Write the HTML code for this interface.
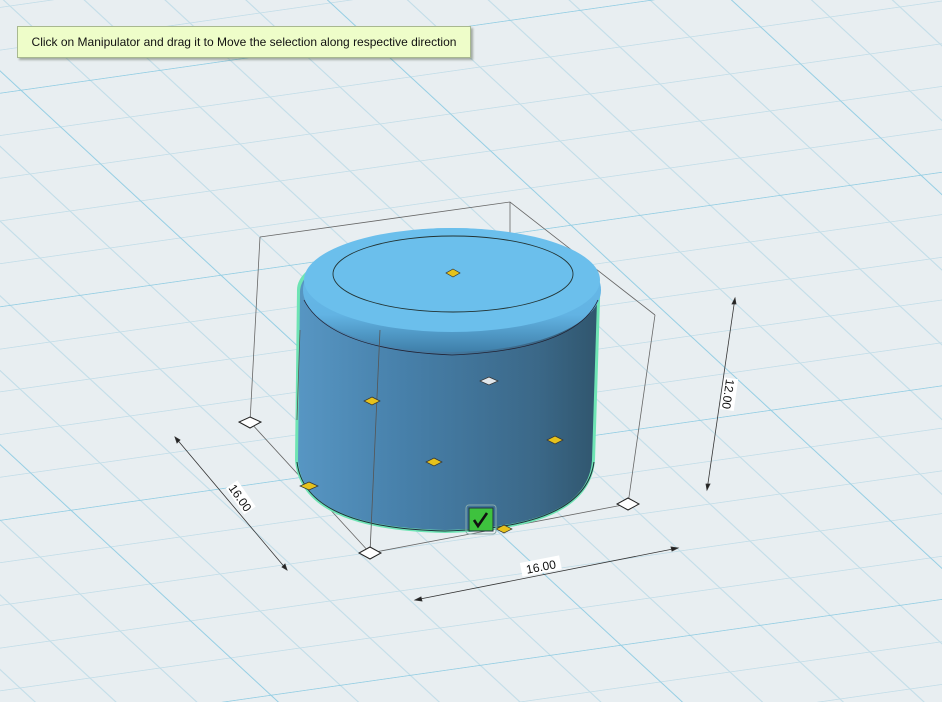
<!DOCTYPE html>
<html><head><style>
html,body{margin:0;padding:0;width:942px;height:702px;overflow:hidden;background:#e8eef1}
.tip{position:absolute;left:17px;top:26px;width:452px;height:30px;background:#eefdc9;border:1px solid #a8b890;box-shadow:2px 2px 2px rgba(80,90,70,.45);font:12px "Liberation Sans",sans-serif;color:#111;line-height:30px;text-align:center}
</style></head><body>
<svg width="942" height="702" style="position:absolute;left:0;top:0">
<defs>
<pattern id="g" width="500" height="500" patternUnits="userSpaceOnUse" patternTransform="matrix(0.7,-0.1,0.4,0.37,20,90)">
<path d="M100 0V500M200 0V500M300 0V500M400 0V500M0 100H500M0 200H500M0 300H500M0 400H500" stroke="#c2dde8" stroke-width="2" fill="none"/>
<path d="M0 0V500M0 0H500" stroke="#92cde3" stroke-width="3.5" fill="none"/>
</pattern>
<linearGradient id="body" x1="0" x2="1" y1="0" y2="0">
<stop offset="0" stop-color="#5796c3"/><stop offset="0.35" stop-color="#4780aa"/><stop offset="0.8" stop-color="#3b6888"/><stop offset="1" stop-color="#30566e"/>
</linearGradient>
<linearGradient id="top" x1="0" x2="0" y1="0" y2="1">
<stop offset="0" stop-color="#6cc0ee"/><stop offset="0.7" stop-color="#62b3e3"/><stop offset="1" stop-color="#3f7fa9"/>
</linearGradient>
</defs>
<rect width="942" height="702" fill="url(#g)"/>
<g stroke="#666" stroke-width="0.8" fill="none">
<path d="M260 237L510 202L655 315M260 237L250 422M510 202L510 300M655 315L628 504M250 422L370 553L628 504"/>
</g>
<path d="M297 290 Q297 250 453 228 Q603 250 600 300 L595 460 Q590 530 445 533 Q300 530 295 460 Z" fill="#6ee4b4"/>
<path d="M300 292 Q300 252 453 231 Q600 252 597 300 L592 460 Q588 527 445 530 Q302 527 298 460 Z" fill="url(#body)"/>
<ellipse cx="452" cy="290" rx="149" ry="62" fill="url(#top)"/>
<ellipse cx="452" cy="280" rx="148" ry="52" fill="#6bbfec"/>
<path d="M304 300 Q330 350 452 355 Q575 350 598 300" stroke="#223" stroke-width="0.8" fill="none"/>
<ellipse cx="453" cy="274" rx="120" ry="38" fill="none" stroke="#233" stroke-width="0.9"/>
<path d="M297 462 Q305 528 445 531 Q585 528 594 462" stroke="#1d2f3a" stroke-width="1" fill="none"/>
<g stroke="#555" stroke-width="0.8" fill="none"><path d="M380 330L370 553M300 330L297 420"/></g>
<g stroke="#333" stroke-width="0.7" fill="#e6c21c">
<path d="M453 269l7 4-7 4-7-4z"/><path d="M372 397l8 4-8 4-8-4z"/><path d="M555 436l8 4-8 4-8-4z"/><path d="M434 458l8 4-8 4-8-4z"/><path d="M309 482l9 4-9 4-9-4z"/><path d="M504 525l8 4-8 4-8-4z"/>
</g>
<path d="M489 377l9 4-9 4-9-4z" fill="#e0e6ea" stroke="#333" stroke-width="0.7"/>
<g fill="#fff" stroke="#222" stroke-width="1">
<path d="M250 417l11 5-11 6-11-6z"/><path d="M370 547l11 6-11 6-11-6z"/><path d="M628 498l11 6-11 6-11-6z"/>
</g>
<rect x="466" y="505" width="30" height="29" rx="3" fill="none" stroke="#8aa" stroke-width="1"/>
<rect x="469" y="508" width="24" height="23" fill="#3ec23e" stroke="#234" stroke-width="1"/>
<path d="M474 520l4 6 9-13" stroke="#111" stroke-width="2.6" fill="none"/>
<g stroke="#333" stroke-width="0.8" fill="#222">
<path d="M175 437L287 570"/><path d="M175 437l2 6 3-3z M287 570l-2-6-3 3z"/>
<path d="M415 600L678 548"/><path d="M415 600l6-3 1 4z M678 548l-6 3-1-4z"/>
<path d="M735 298L707 490"/><path d="M735 298l-3 6 4 0z M707 490l3-6-4 0z"/>
</g>
<g font-family="Liberation Sans, sans-serif" font-size="12" fill="#111">
<g transform="translate(240,498) rotate(55)"><rect x="-16" y="-8" width="32" height="14" fill="#fff"/><text x="0" y="4" text-anchor="middle">16.00</text></g>
<g transform="translate(541,567) rotate(-11)"><rect x="-20" y="-8" width="40" height="14" fill="#fff"/><text x="0" y="4" text-anchor="middle">16.00</text></g>
<g transform="translate(728,394) rotate(98)"><rect x="-16" y="-8" width="32" height="14" fill="#fff"/><text x="0" y="4" text-anchor="middle">12.00</text></g>
</g>
</svg>
<div class="tip">Click on Manipulator and drag it to Move the selection along respective direction</div>
</body></html>
